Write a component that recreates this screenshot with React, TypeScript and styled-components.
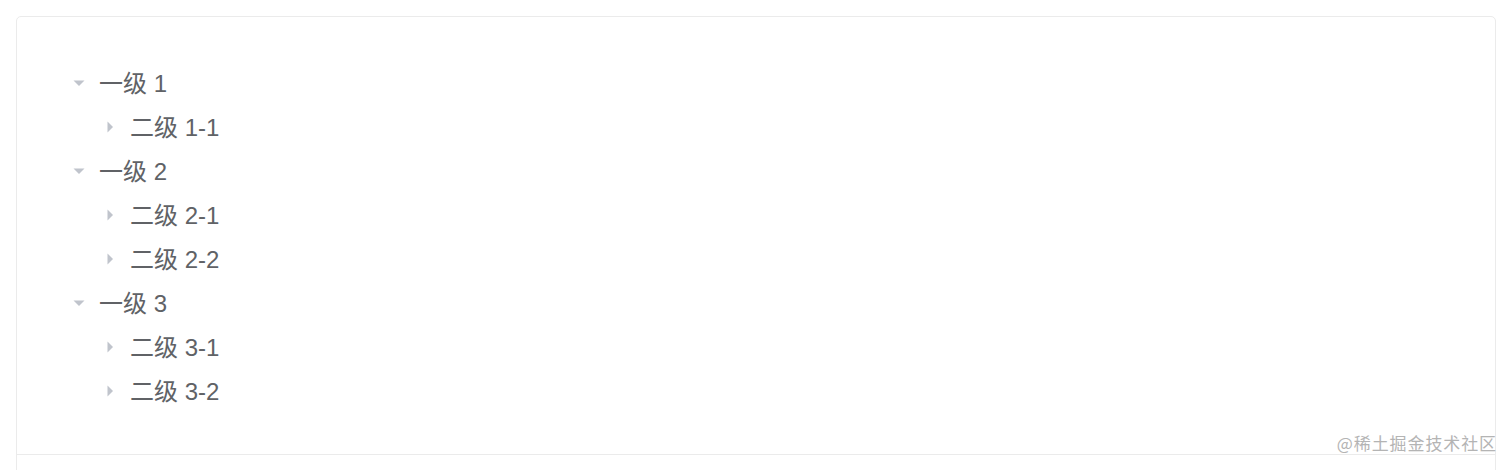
import styled, { createGlobalStyle } from "styled-components";

const GlobalStyle = createGlobalStyle`
  html, body {
    margin: 0;
    padding: 0;
    background: #ffffff;
    font-family: "Liberation Sans", "Noto Sans CJK SC", sans-serif;
  }
`;

type TreeNode = { label: string; children?: TreeNode[] };

const data: TreeNode[] = [
  { label: "一级 1", children: [{ label: "二级 1-1" }] },
  { label: "一级 2", children: [{ label: "二级 2-1" }, { label: "二级 2-2" }] },
  { label: "一级 3", children: [{ label: "二级 3-1" }, { label: "二级 3-2" }] },
];

const Page = styled.div`
  padding: 16px 16px 0 16px;
  height: 470px;
  box-sizing: border-box;
  overflow: hidden;
`;

const Card = styled.div`
  position: relative;
  border: 1px solid #ebebeb;
  border-radius: 5px;
  height: 480px;
  box-sizing: border-box;
`;

const Source = styled.div`
  padding: 44px 0 41px 47px;
  border-bottom: 1px solid #ebebeb;
`;

const Tree = styled.div`
  display: flex;
  flex-direction: column;
`;

const Row = styled.div<{ $level: number }>`
  display: flex;
  align-items: center;
  height: 44px;
  padding-left: ${(p) => p.$level * 31}px;
  color: #606266;
  font-size: 24px;
  font-family: "Liberation Sans", "Noto Sans CJK SC", sans-serif;
`;

const Caret = styled.span<{ $open: boolean }>`
  display: flex;
  align-items: center;
  justify-content: center;
  width: 30px;
  height: 44px;
  margin-right: 5px;

  svg {
    display: block;
    transform: ${(p) => (p.$open ? "none" : "rotate(-90deg)")};
  }
`;

const Label = styled.span`
  line-height: 1;
  padding-top: 1px;
`;

const Watermark = styled.div`
  position: absolute;
  right: -2px;
  top: 413px;
  font-size: 17px;
  color: #b4b4b4;
  font-family: "Noto Sans CJK SC", sans-serif;
  letter-spacing: 0.9px;
`;

function renderNodes(nodes: TreeNode[], level: number): JSX.Element[] {
  return nodes.flatMap((n) => [
    <Row key={n.label} $level={level}>
      <Caret $open={!!n.children}>
        <svg width="12" height="12" viewBox="0 0 12 12">
          <polygon points="0.5,3.5 11.5,3.5 6,9" fill="#c0c4cc" />
        </svg>
      </Caret>
      <Label>{n.label}</Label>
    </Row>,
    ...(n.children ? renderNodes(n.children, level + 1) : []),
  ]);
}

export default function App() {
  return (
    <Page>
      <GlobalStyle />
      <Card>
        <Source>
          <Tree>{renderNodes(data, 0)}</Tree>
        </Source>
        <Watermark>@稀土掘金技术社区</Watermark>
      </Card>
    </Page>
  );
}
